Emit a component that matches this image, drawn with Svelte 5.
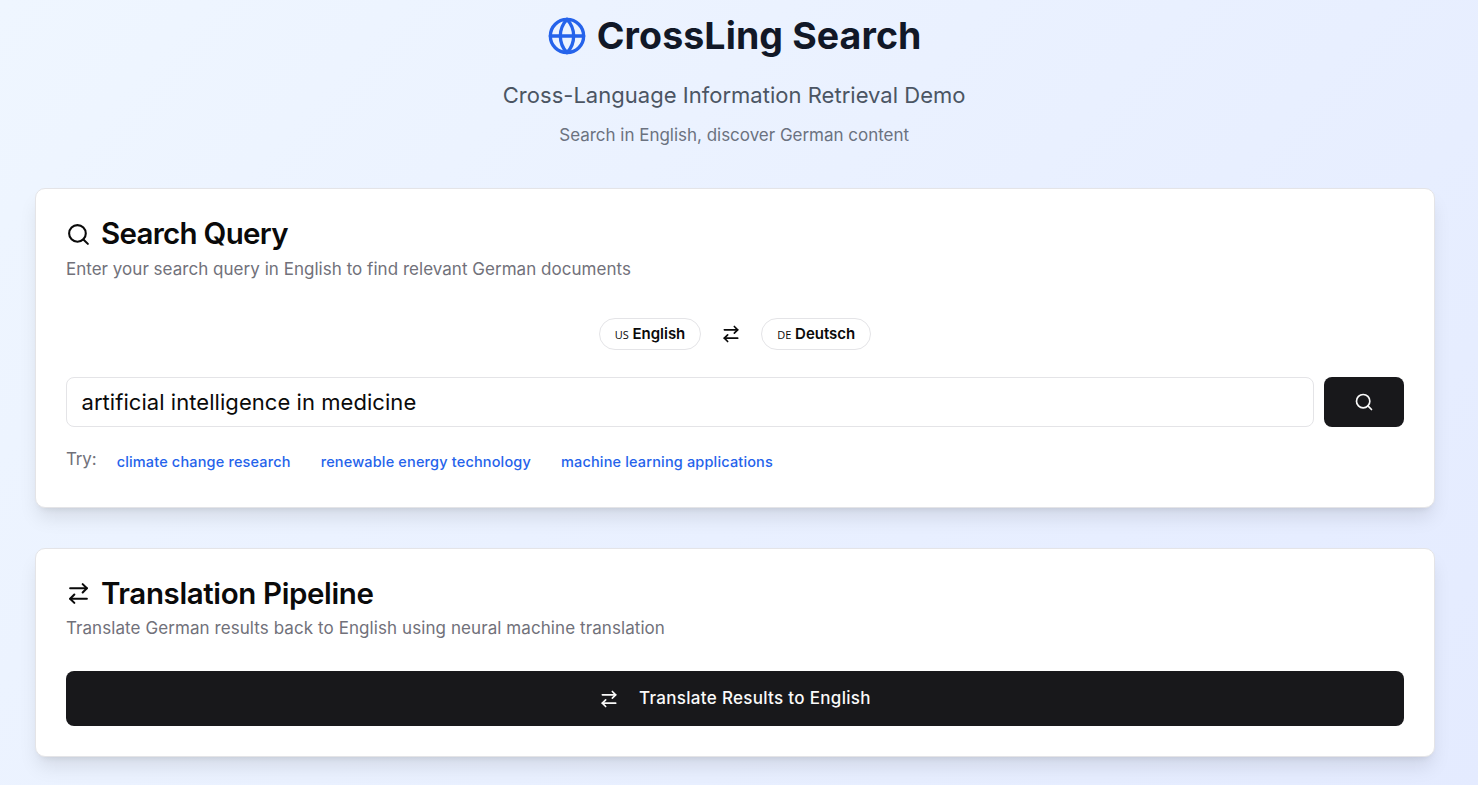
<script>
  const examples = [
    'climate change research',
    'renewable energy technology',
    'machine learning applications'
  ];
</script>

{#snippet search(size)}
  <svg width={size} height={size} viewBox="0 0 24 24"><circle cx="11" cy="11" r="8" /><path d="m21 21-4.3-4.3" /></svg>
{/snippet}
{#snippet swap(size)}
  <svg width={size} height={size} viewBox="0 0 24 24"><path d="m16 3 4 4-4 4" /><path d="M20 7H4" /><path d="m8 21-4-4 4-4" /><path d="M4 17h16" /></svg>
{/snippet}

<main>
  <header>
    <h1>
      <svg class="globe" width="40" height="40" viewBox="0 0 24 24"><circle cx="12" cy="12" r="10" /><path d="M12 2a14.5 14.5 0 0 0 0 20 14.5 14.5 0 0 0 0-20" /><path d="M2 12h20" /></svg>
      <span>CrossLing Search</span>
    </h1>
    <p class="lead">Cross-Language Information Retrieval Demo</p>
    <p class="tagline">Search in English, discover German content</p>
  </header>

  <section class="card query">
    <h2>{@render search(25)}<span>Search Query</span></h2>
    <p class="desc">Enter your search query in English to find relevant German documents</p>
    <div class="languages">
      <span class="badge"><small>US</small><span>English</span></span>
      {@render swap(20)}
      <span class="badge"><small>DE</small><span>Deutsch</span></span>
    </div>
    <div class="form">
      <div class="field">artificial intelligence in medicine</div>
      <button class="submit" aria-label="Search">{@render search(20)}</button>
    </div>
    <div class="try">
      <span>Try:</span>
      <div class="examples">
        {#each examples as example}<button>{example}</button>{/each}
      </div>
    </div>
  </section>

  <section class="card pipeline">
    <h2>{@render swap(25)}<span>Translation Pipeline</span></h2>
    <p class="desc">Translate German results back to English using neural machine translation</p>
    <button class="translate">{@render swap(20)}<span>Translate Results to English</span></button>
  </section>
</main>

<style>
  :global(body) { margin: 0; overflow: hidden; }
  main { box-sizing: border-box; height: 785px; padding: 0 43.5px 0 35.4px; font-family: Inter, sans-serif; color: #0a0a0a; background: linear-gradient(to bottom right, #eff6ff, #e0e7ff) 0 0 / 100% 1700px no-repeat; }
  h1, h2, p { margin: 0; }
  svg { flex: none; fill: none; stroke: currentColor; stroke-width: 2; stroke-linecap: round; stroke-linejoin: round; }
  button { font-family: inherit; border: 0; padding: 0; }
  header { height: 188px; padding-right: 1.6px; display: flex; flex-direction: column; align-items: center; white-space: nowrap; }
  h1 { display: flex; align-items: center; gap: 10px; height: 45px; margin-top: 13px; font-size: 37.5px; font-weight: 700; letter-spacing: 0.1px; color: #111827; }
  .globe { color: #2563eb; }
  .lead { margin-top: 21px; height: 32px; line-height: 32px; font-size: 22px; letter-spacing: 0.02px; color: #4b5563; }
  .tagline { margin-top: 11px; line-height: 26px; font-size: 17px; letter-spacing: -0.02px; color: #6b7280; }
  .card { box-sizing: border-box; padding: 29px 29.5px; background: #fff; border: 1px solid #e4e4e7; border-radius: 10px; box-shadow: 0 12.5px 18.75px -3.75px rgb(0 0 0 / 10%), 0 5px 7.5px -5px rgb(0 0 0 / 10%); }
  .query { height: 320px; }
  .pipeline { height: 209px; margin-top: 40px; }
  h2 { display: flex; align-items: center; gap: 10px; height: 30px; font-size: 29.5px; font-weight: 600; letter-spacing: -0.7px; }
  h2 svg { position: relative; top: 1px; }
  .pipeline h2 { letter-spacing: -0.38px; }
  .pipeline h2 svg { top: 0; }
  .desc { margin-top: 8px; height: 26px; line-height: 26px; font-size: 17px; letter-spacing: 0.03px; color: #71717a; }
  .pipeline .desc { margin-top: 7px; letter-spacing: 0.08px; }
  .languages { display: flex; justify-content: center; align-items: center; gap: 20px; margin-top: 36px; height: 32px; }
  .badge { box-sizing: border-box; height: 32px; padding: 0 15px; display: flex; align-items: center; gap: 3.8px; border: 1px solid #e4e4e7; border-radius: 16px; font-size: 15px; font-weight: 600; letter-spacing: -0.03px; }
  .badge > span { position: relative; top: -1px; }
  .badge small { font: 400 11px 'Open Sans', sans-serif; }
  .form { display: flex; gap: 10px; margin-top: 27px; height: 50px; }
  .field { flex: 1; box-sizing: border-box; border: 1px solid #e4e4e7; border-radius: 8px; padding-left: 14.6px; line-height: 48px; font-size: 22px; letter-spacing: 0.055px; }
  .submit { width: 80px; display: grid; place-items: center; border-radius: 8px; background: #18181b; color: #fafafa; }
  .try { display: flex; gap: 20px; margin-top: 19px; font-size: 17px; line-height: 26px; letter-spacing: -0.1px; color: #71717a; }
  .examples { display: flex; gap: 30px; padding-top: 3px; }
  .examples button { background: none; font-size: 14.5px; font-weight: 500; line-height: 25px; letter-spacing: 0.16px; color: #2563eb; }
  .translate { margin-top: 30px; width: 100%; height: 55px; display: flex; align-items: center; justify-content: center; gap: 20px; border-radius: 8px; background: #18181b; color: #fafafa; font-size: 17px; font-weight: 500; letter-spacing: 0.31px; }
  .translate span { position: relative; top: -0.5px; }
</style>
